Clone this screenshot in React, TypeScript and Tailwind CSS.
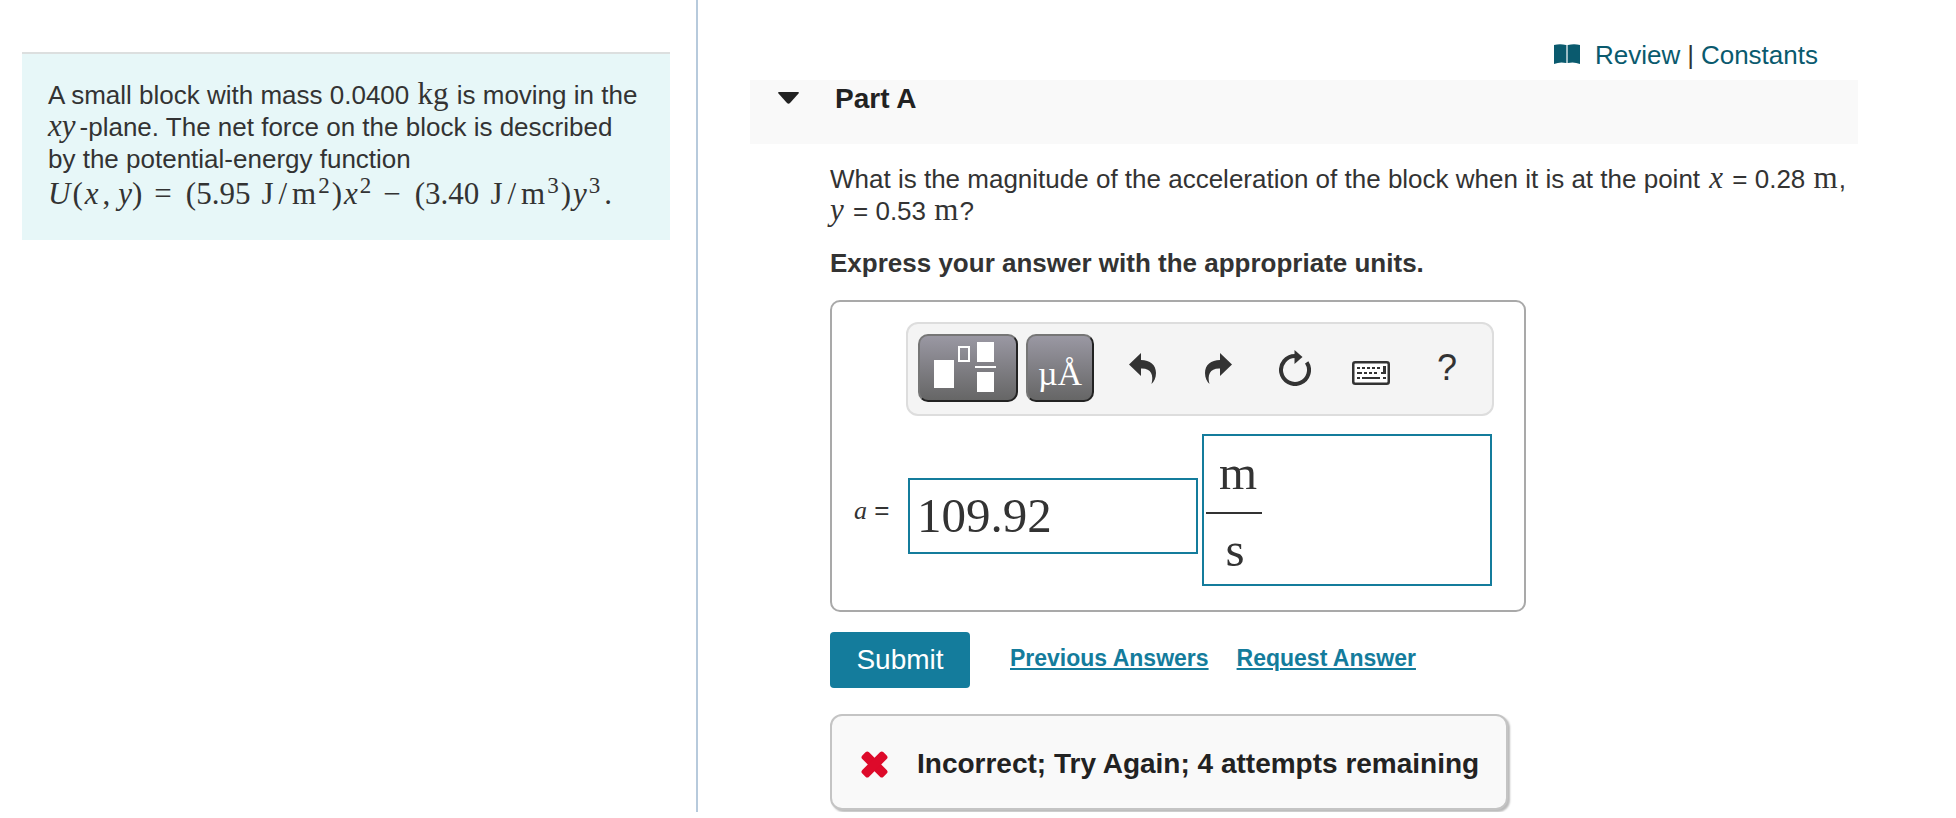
import { useState } from 'react';
import type { ReactNode } from 'react';

const SERIF = "font-['Liberation_Serif',serif]";

export default function App() {
  return (
    <div className="grid grid-cols-[698fr_1258fr] bg-white font-['Liberation_Sans',sans-serif] text-[26px] leading-8 text-[#333333]">
      <aside className="border-r-2 border-[#b7cadc] pt-[52px] pr-[26px] pl-[22px]">
        <ProblemStatement />
      </aside>
      <main className="pr-[98px] pb-[2px] pl-[52px]">
        <TopLinks />
        <PartHeader />
        <div className="pt-[19px] pl-20">
          <Question />
          <AnswerBox />
          <Actions />
          <Feedback />
        </div>
      </main>
    </div>
  );
}

// --- MATH HELPERS ---
function Rm({ children, className = '' }: { children: ReactNode; className?: string }) {
  return <span className={`${SERIF} text-[31px] leading-7 ${className}`}>{children}</span>;
}

function It({ children, className = '' }: { children: ReactNode; className?: string }) {
  return <i className={`${SERIF} text-[31px] leading-7 ${className}`}>{children}</i>;
}

function Sup({ children }: { children: ReactNode }) {
  return <sup className={`${SERIF} top-0 self-start text-[23px] leading-3`}>{children}</sup>;
}

function ProblemStatement() {
  return (
    <section className="border-t-2 border-[#dcdfdf] bg-[#e7f7f8] px-[26px] pt-[25px] pb-[26px]">
      <p className="pr-[6px]">
        A small block with mass 0.0400 <Rm className="mx-px">kg</Rm> is moving in the{' '}
        <It className="mr-1">xy</It>-plane. The net force on the block is described by the potential-energy
        function
      </p>
      <div className="flex h-[39px] items-baseline pt-[5px] whitespace-nowrap">
        <It>U</It>
        <Rm className="ml-[2px]">(</Rm>
        <It className="ml-[2px]">x</It>
        <Rm className="ml-1">,</Rm>
        <It className="ml-2">y</It>
        <Rm>)</Rm>
        <Rm className="mx-3">=</Rm>
        <Rm className="ml-[2px]">(5.95</Rm>
        <Rm className="ml-[11px]">J</Rm>
        <Rm className="mx-[5px]">/</Rm>
        <Rm className="mr-[2px]">m</Rm>
        <Sup>2</Sup>
        <Rm className="mx-[2px]">)</Rm>
        <It className="mr-[2px]">x</It>
        <Sup>2</Sup>
        <Rm className="mx-3">−</Rm>
        <Rm className="ml-[2px]">(3.40</Rm>
        <Rm className="ml-[11px]">J</Rm>
        <Rm className="mx-[5px]">/</Rm>
        <Rm className="mr-[2px]">m</Rm>
        <Sup>3</Sup>
        <Rm className="mx-[2px]">)</Rm>
        <It className="mr-[2px]">y</It>
        <Sup>3</Sup>
        <Rm className="ml-1">.</Rm>
      </div>
    </section>
  );
}

function TopLinks() {
  return (
    <nav className="flex h-20 items-start justify-end pt-[39px] pr-10 text-[#0a5a6e]">
      <svg viewBox="0 0 26 20" className="mt-[5px] mr-[15px] h-5 w-[26px]" fill="currentColor" aria-hidden="true">
        <path d="M0 1Q6-.5 12 1V19Q6 17.500 0 20Z" />
        <path d="M14 1Q20-.5 26 1V20Q20 17.500 14 19Z" />
        <path d="M12 1h2v18h-2z" opacity=".4" />
      </svg>
      <a href="#review">Review</a>
      <span className="mx-[7px] text-[#333333]">|</span>
      <a href="#constants">Constants</a>
    </nav>
  );
}

function PartHeader() {
  return (
    <header className="flex h-16 items-start bg-[#f9f9f9] pl-7 text-[#222222]">
      <button type="button" aria-label="Collapse Part A" className="mt-3 mr-9">
        <svg viewBox="0 0 21 12" className="h-3 w-[21px]" fill="currentColor">
          <path d="M1 0H20Q21.500 0 20.500 1.500L12 11Q10.500 12.500 9 11L.5 1.500Q-.5 0 1 0Z" />
        </svg>
      </button>
      <h2 className="pt-[3px] text-[28px] font-bold">Part A</h2>
    </header>
  );
}

function Question() {
  return (
    <>
      <p>
        What is the magnitude of the acceleration of the block when it is at the point{' '}
        <It className="mx-[2px]">x</It> = 0.28 <Rm className="mx-px">m</Rm>, <It className="mr-[2px]">y</It> ={' '}
        0.53 <Rm className="mx-px">m</Rm>?
      </p>
      <p className="mt-5 font-bold">Express your answer with the appropriate units.</p>
    </>
  );
}

// --- ANSWER ENTRY ---
function AnswerBox() {
  const [value, setValue] = useState('109.92');

  return (
    <div className="mt-[21px] h-[312px] w-[696px] rounded-[10px] border-2 border-[#a9a9a9] pt-5 pr-[30px] pl-[22px]">
      <Toolbar />
      <div className="mt-[18px] flex items-start">
        <label htmlFor="answer" className="w-[54px] pt-[60px]">
          <i className={`${SERIF} leading-7`}>a</i> =
        </label>
        <input
          id="answer"
          value={value}
          onChange={(e) => setValue(e.target.value)}
          className="mt-11 h-[76px] w-[290px] border-2 border-[#147c9c] px-[7px] pb-[2px] font-['Liberation_Serif',serif] text-[49px] outline-none"
        />
        <div
          role="textbox"
          aria-label="Units"
          tabIndex={0}
          className="ml-1 h-[152px] w-[290px] border-2 border-[#147c9c] pt-px pl-[2px] font-['Liberation_Serif',serif] text-[49px] leading-[72px]"
        >
          <div className="w-14 text-center">
            <div className="h-[77px] border-b-2 border-[#333333] pl-2">m</div>
            <div className="pl-[2px]">s</div>
          </div>
        </div>
      </div>
    </div>
  );
}

function Toolbar() {
  const keyClass =
    'h-[68px] rounded-[10px] border-2 border-t-[#767676] border-l-[#767676] border-r-[#222222] border-b-[#222222] bg-linear-to-b from-[#9a98a3] to-[#666666] text-white';
  const iconClass = 'flex h-[68px] w-[76px] items-center justify-center';

  return (
    <div className="ml-[52px] flex h-[94px] w-[588px] items-center rounded-xl border-2 border-[#dddddd] bg-[#f4f4f4] pb-[2px] pl-[10px]">
      <button type="button" aria-label="Templates" className={`${keyClass} w-[100px]`}>
        <svg viewBox="0 0 96 64" className="h-16 w-24" fill="currentColor">
          <path d="M14 24h20v28H14zM57 6h17v20H57zM55 30h21v2H55zM57 36h17v20H57z" />
          <path d="M39 11h10v14H39z" fill="none" stroke="currentColor" strokeWidth="2" />
        </svg>
      </button>
      <button
        type="button"
        aria-label="Symbols"
        className={`${keyClass} ml-2 w-[68px] pt-3 font-['Liberation_Serif',serif] text-[34px]`}
      >
        µÅ
      </button>
      <button type="button" aria-label="Undo" className={`${iconClass} ml-[10px]`}>
        <svg viewBox="0 0 27 31" className="h-[31px] w-[27px]" fill="#333333">
          <path d="M0 11.500 12 0V7C21 7 27 12 27 20C27 25 25 28.500 22.500 31C25 22 22 15 12 15.500V23Z" />
        </svg>
      </button>
      <button type="button" aria-label="Redo" className={iconClass}>
        <svg viewBox="0 0 27 31" className="h-[31px] w-[27px]" fill="#333333">
          <path d="M27 11.500 15 0V7C6 7 0 12 0 20C0 25 2 28.500 4.500 31C2 22 5 15 15 15.500V23Z" />
        </svg>
      </button>
      <button type="button" aria-label="Reset" className={`${iconClass} ml-px`}>
        <svg viewBox="0 0 32 36" className="h-9 w-8" fill="none">
          <path d="M16 6A14 14 0 1 0 27.700 12.300" stroke="#333333" strokeWidth="4" />
          <path d="M15.500 0 23.500 7 15.500 14Z" fill="#333333" />
        </svg>
      </button>
      <button type="button" aria-label="Keyboard" className={`${iconClass} pt-[10px]`}>
        <svg viewBox="0 0 38 24" className="h-6 w-[38px]" fill="#333333">
          <rect x="1.25" y="1.25" width="35.5" height="21.5" rx="2" fill="white" stroke="#333333" strokeWidth="2.5" />
          <path d="M5 6h3v2H5zM10 6h3v2h-3zM15 6h3v2h-3zM20 6h3v2h-3zM25 6h3v2h-3zM31 5h3v8h-5v-2h2zM5 11h5v2H5zM12 11h3v2h-3zM17 11h3v2h-3zM22 11h3v2h-3zM5 16h3v2H5zM10 16h18v2H10zM31 16h3v2h-3z" />
        </svg>
      </button>
      <button type="button" aria-label="Help" className={`${iconClass} text-[36px]`}>
        ?
      </button>
    </div>
  );
}

function Actions() {
  return (
    <div className="mt-5 flex h-14 items-center font-bold text-[#147c9c]">
      <button type="button" className="h-14 w-[140px] rounded bg-[#147c9c] text-[28px] font-normal text-white">
        Submit
      </button>
      <a href="#previous" className="ml-10 pb-1 text-[23px] underline decoration-2 underline-offset-2">
        Previous Answers
      </a>
      <a href="#request" className="ml-7 pb-1 text-[23px] underline decoration-2 underline-offset-2">
        Request Answer
      </a>
    </div>
  );
}

function Feedback() {
  return (
    <div
      role="status"
      className="mt-[26px] flex h-24 w-[678px] items-center rounded-xl border-2 border-[#c4c4c4] bg-[#f9f9f9] pt-1 pl-[29px] text-[28px] font-bold text-[#222222] shadow-[2px_2px_2px_#bbbbbb]"
    >
      <svg viewBox="0 0 27 27" className="mr-[29px] h-[27px] w-[27px]" fill="#dd0a2a" aria-hidden="true">
        <rect x="-1.5" y="8.75" width="30" height="9.5" rx="2.5" transform="rotate(45 13.5 13.5)" />
        <rect x="-1.5" y="8.75" width="30" height="9.5" rx="2.5" transform="rotate(-45 13.5 13.5)" />
      </svg>
      Incorrect; Try Again; 4 attempts remaining
    </div>
  );
}
